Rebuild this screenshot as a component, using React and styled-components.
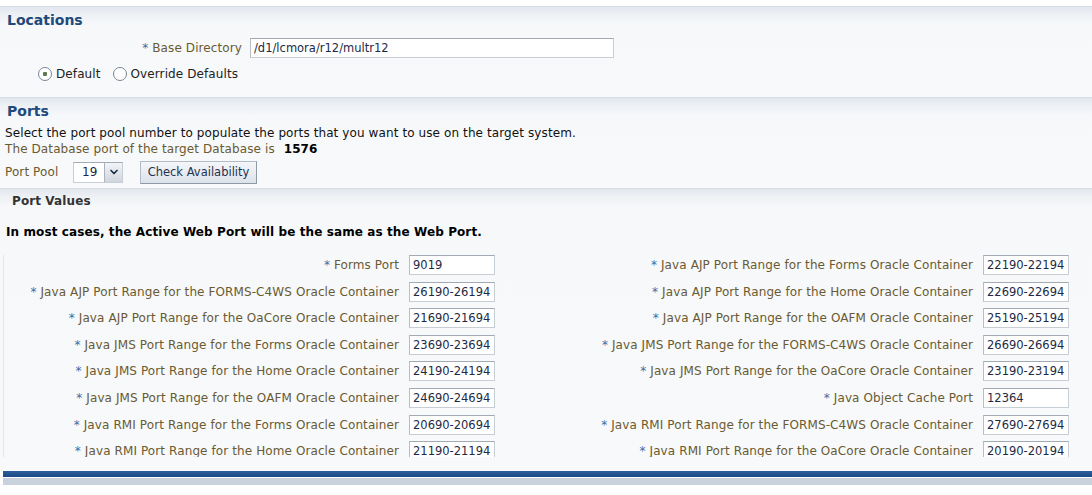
import styled, { createGlobalStyle } from "styled-components";
import { ChevronDown } from "lucide-react";

const GlobalStyle = createGlobalStyle`
  body {
    margin: 0;
    background: #ffffff;
    font-family: "DejaVu Sans", Verdana, sans-serif;
    font-size: 12px;
    letter-spacing: 0.1px;
  }
`;

// left and right column of the Port Values table
const leftFields = [
  ["Forms Port", "9019"],
  ["Java AJP Port Range for the FORMS-C4WS Oracle Container", "26190-26194"],
  ["Java AJP Port Range for the OaCore Oracle Container", "21690-21694"],
  ["Java JMS Port Range for the Forms Oracle Container", "23690-23694"],
  ["Java JMS Port Range for the Home Oracle Container", "24190-24194"],
  ["Java JMS Port Range for the OAFM Oracle Container", "24690-24694"],
  ["Java RMI Port Range for the Forms Oracle Container", "20690-20694"],
  ["Java RMI Port Range for the Home Oracle Container", "21190-21194"],
];

const rightFields = [
  ["Java AJP Port Range for the Forms Oracle Container", "22190-22194"],
  ["Java AJP Port Range for the Home Oracle Container", "22690-22694"],
  ["Java AJP Port Range for the OAFM Oracle Container", "25190-25194"],
  ["Java JMS Port Range for the FORMS-C4WS Oracle Container", "26690-26694"],
  ["Java JMS Port Range for the OaCore Oracle Container", "23190-23194"],
  ["Java Object Cache Port", "12364"],
  ["Java RMI Port Range for the FORMS-C4WS Oracle Container", "27690-27694"],
  ["Java RMI Port Range for the OaCore Oracle Container", "20190-20194"],
];

const App = () => {
  return (
    <Page>
      <GlobalStyle />
      <Section height={91}>
        <Title>Locations</Title>
        <DirRow>
          <Label width={242} align="right"><Req>*</Req> Base Directory</Label>
          <TextInput width={364} defaultValue="/d1/lcmora/r12/multr12" />
        </DirRow>
        <RadioRow>
          <RadioItem>
            <Radio checked />
            Default
          </RadioItem>
          <RadioItem>
            <Radio />
            Override Defaults
          </RadioItem>
        </RadioRow>
      </Section>

      <Section height={91}>
        <Title>Ports</Title>
        <Line>Select the port pool number to populate the ports that you want to use on the target system.</Line>
        <Line label>
          The Database port of the target Database is <Strong>1576</Strong>
        </Line>
        <PoolRow>
          <Label width={68}>Port Pool</Label>
          <Select>
            <SelectValue>19</SelectValue>
            <SelectButton>
              <ChevronDown size={12} strokeWidth={3.5} color="#1f2d44" />
            </SelectButton>
          </Select>
          <Button>Check Availability</Button>
        </PoolRow>
      </Section>

      <Section height={283}>
        <SubTitle>Port Values</SubTitle>
        <Note>In most cases, the Active Web Port will be the same as the Web Port.</Note>
        <Scroller>
          <FieldGrid>
            {leftFields.map((f, i) => [
              <Label key={"l" + i} align="right"><Req>*</Req> {f[0]}</Label>,
              <TextInput key={"li" + i} defaultValue={f[1]} />,
              <Label key={"r" + i} align="right"><Req>*</Req> {rightFields[i][0]}</Label>,
              <TextInput key={"ri" + i} defaultValue={rightFields[i][1]} />,
            ])}
          </FieldGrid>
        </Scroller>
      </Section>

      <Footer>
        <BlueBar />
        <GreyBar />
      </Footer>
    </Page>
  );
};

export default App;

const Page = styled.div`
  width: 1092px;
  height: 495px;
  padding-top: 6px;
  box-sizing: border-box;
  background: #ffffff;
  display: flex;
  flex-direction: column;
  overflow: hidden;
`;

const Section = styled.div`
  height: ${(props) => props.height}px;
  flex-shrink: 0;
  box-sizing: border-box;
  border-top: 1px solid #d5dce6;
  background: linear-gradient(#e2e7ee 0px, #eef1f5 8px, #f6f8fa 18px, #f7f9fb 100%);
  display: flex;
  flex-direction: column;
`;

const Title = styled.div`
  height: 27px;
  line-height: 27px;
  padding-left: 7px;
  font-size: 14px;
  font-weight: 700;
  letter-spacing: 0;
  color: #1e4a7c;
`;

const SubTitle = styled.div`
  height: 24px;
  line-height: 24px;
  padding-left: 12px;
  font-size: 12px;
  font-weight: 700;
  color: #333333;
`;

const Note = styled.div`
  margin-top: 9px;
  padding-left: 6px;
  height: 20px;
  line-height: 20px;
  font-size: 12px;
  font-weight: 700;
  color: #000000;
`;

const Label = styled.span`
  display: inline-block;
  width: ${(props) => (props.width ? props.width + "px" : "auto")};
  flex-shrink: 0;
  color: #6a5a32;
  white-space: nowrap;
  text-align: ${(props) => props.align || "left"};
`;

const Req = styled.span`
  color: #3d6ea8;
`;

const DirRow = styled.div`
  margin-top: 4px;
  height: 20px;
  display: flex;
  align-items: center;
  gap: 8px;
`;

const TextInput = styled.input`
  width: ${(props) => props.width || 86}px;
  height: 20px;
  box-sizing: border-box;
  border: 1px solid #c8ced6;
  border-top-color: #a3aab4;
  border-left-color: #b7bec8;
  background: #ffffff;
  padding: 0 3px;
  font-family: "DejaVu Sans", Verdana, sans-serif;
  font-size: 11.5px;
  letter-spacing: 0;
  color: #1e2a44;
  outline: none;
`;

const RadioRow = styled.div`
  margin-top: 7px;
  height: 18px;
  display: flex;
  align-items: center;
  gap: 12px;
  padding-left: 38px;
  color: #222222;
`;

const RadioItem = styled.label`
  display: flex;
  align-items: center;
  gap: 4px;
`;

const Radio = styled.span`
  width: 14px;
  height: 14px;
  box-sizing: border-box;
  border-radius: 50%;
  border: 1px solid #7b8797;
  background: radial-gradient(circle, ${(props) => (props.checked ? "#5d7a52 0 2px, #ffffff 2.5px" : "#ffffff 0")});
`;

const Line = styled.div`
  height: 16px;
  line-height: 16px;
  padding-left: 5px;
  color: ${(props) => (props.label ? "#6a5a32" : "#111111")};
`;

const Strong = styled.span`
  margin-left: 5px;
  font-weight: 700;
  font-size: 12px;
  color: #000000;
`;

const PoolRow = styled.div`
  margin-top: 4px;
  height: 22px;
  display: flex;
  align-items: center;
  padding-left: 5px;
`;

const Select = styled.div`
  height: 19px;
  display: flex;
  align-items: stretch;
  border: 1px solid #c8ced6;
  border-top-color: #a3aab4;
  background: #ffffff;
`;

const SelectValue = styled.span`
  width: 30px;
  padding-left: 8px;
  box-sizing: border-box;
  line-height: 19px;
  color: #1e2a44;
`;

const SelectButton = styled.span`
  width: 17px;
  display: flex;
  align-items: center;
  justify-content: center;
  border-left: 1px solid #a9b2be;
  background: linear-gradient(#f2f4f7, #cfd6df);
`;

const Button = styled.button`
  margin-left: 17px;
  width: 117px;
  height: 23px;
  border: 1px solid #b2bbc7;
  border-bottom-color: #8e99a8;
  border-right-color: #8e99a8;
  background: linear-gradient(#f4f6f9, #dde2ea);
  font-family: "DejaVu Sans", Verdana, sans-serif;
  font-size: 11.5px;
  letter-spacing: 0;
  color: #1f3150;
  padding: 0;
`;

const Scroller = styled.div`
  margin-top: 13px;
  height: 202px;
  overflow: hidden;
  border-left: 1px solid #e3e7ec;
  margin-left: 3px;
`;

const FieldGrid = styled.div`
  display: grid;
  grid-template-columns: 395px 86px 468px 86px;
  grid-auto-rows: 20px;
  column-gap: 10px;
  row-gap: 6.6px;
  align-items: center;
`;

const Footer = styled.div`
  margin-top: auto;
  margin-bottom: 10px;
  padding-left: 3px;
`;

const BlueBar = styled.div`
  height: 6px;
  background: linear-gradient(#2d5f9c, #1b4a85);
`;

const GreyBar = styled.div`
  height: 7px;
  margin-top: 1px;
  background: #c9d1dc;
`;
